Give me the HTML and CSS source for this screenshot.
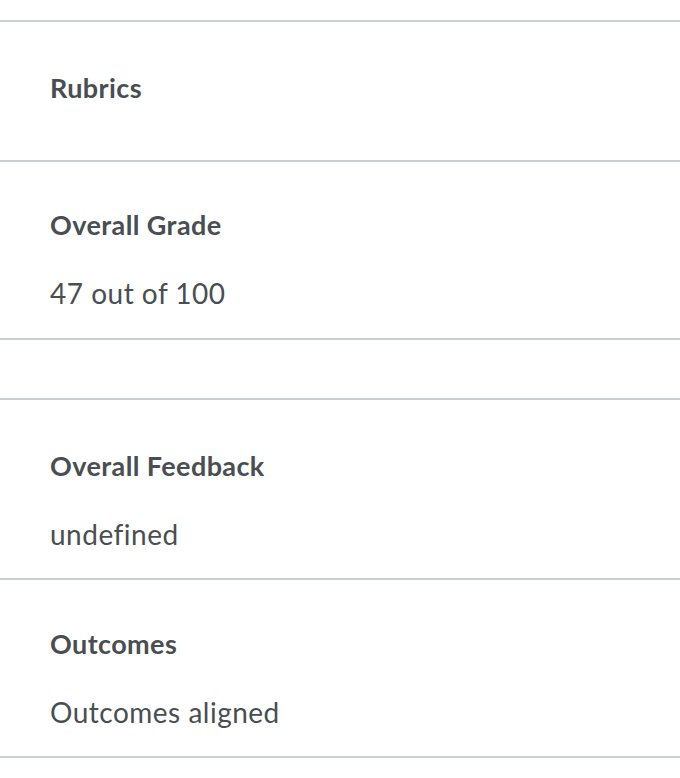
FILE: index.html
```html
<!DOCTYPE html>
<html>
<head>
<meta charset="utf-8">
<link rel="stylesheet" href="styles.css">
</head>
<body>
<div class="panel">
  <section class="block block-rubrics">
    <h2 class="title">Rubrics</h2>
  </section>
  <section class="block">
    <h2 class="title">Overall Grade</h2>
    <p class="value">47 out of 100</p>
  </section>
  <section class="block block-empty"></section>
  <section class="block block-feedback">
    <h2 class="title">Overall Feedback</h2>
    <p class="value">undefined</p>
  </section>
  <section class="block block-outcomes">
    <h2 class="title">Outcomes</h2>
    <p class="value">Outcomes aligned</p>
  </section>
</div>
</body>
</html>
```

FILE: styles.css
```css
html, body {
  margin: 0;
  padding: 0;
  background: #ffffff;
}
body {
  font-family: Lato, "Noto Sans", sans-serif;
  color: #494e52;
}
.panel {
  padding-top: 20px;
}
.block {
  border-top: 2px solid #c8d0d6;
  padding: 43px 50px 25px;
  display: flex;
  flex-direction: column;
  gap: 28px;
}
.panel .block:last-child {
  border-bottom: 2px solid #c8d0d6;
}
.block-rubrics {
  padding: 46px 50px 52px;
}
.block-empty {
  padding: 0;
  height: 58px;
}
.block-feedback {
  padding: 46px 50px 24px;
}
.block-outcomes {
  padding: 44px 50px 24px;
}
.title {
  margin: 0;
  font-size: 27px;
  line-height: 40px;
  font-weight: 700;
  letter-spacing: 0.4px;
}
.value {
  margin: 0;
  font-size: 28px;
  line-height: 40px;
  font-weight: 400;
  letter-spacing: 0.5px;
}
```
